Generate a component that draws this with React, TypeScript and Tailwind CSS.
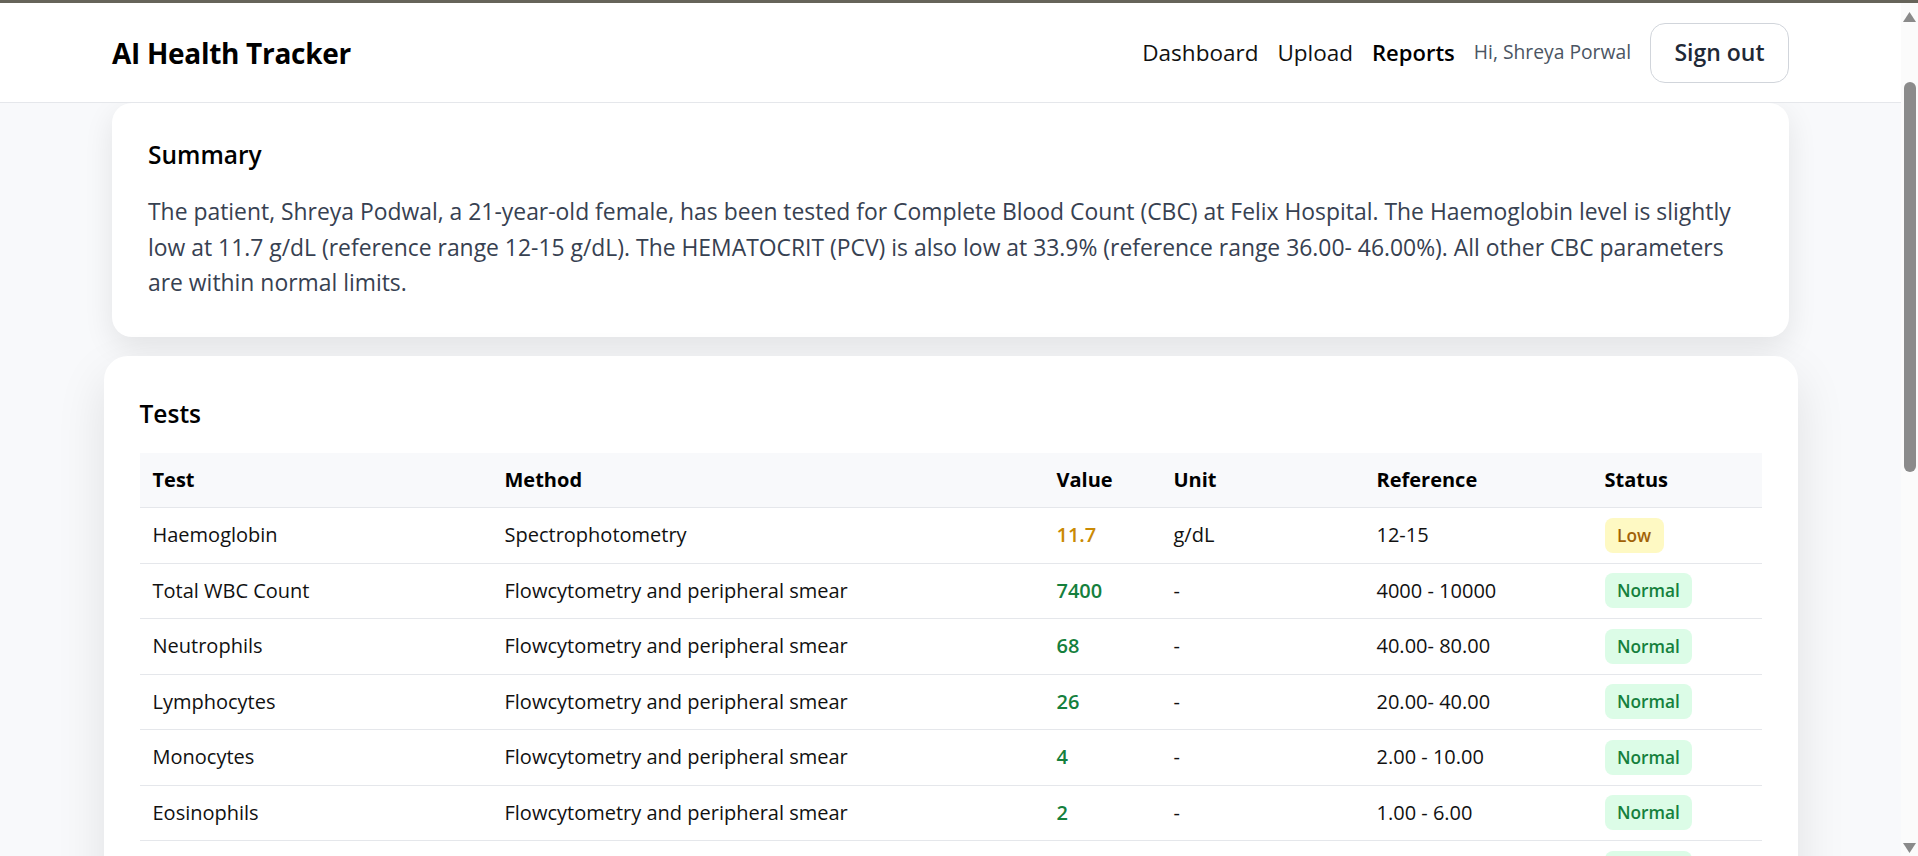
import React from 'react';

const rows = [
  { test: 'Haemoglobin', method: 'Spectrophotometry', value: '11.7', unit: 'g/dL', ref: '12-15', status: 'Low' },
  { test: 'Total WBC Count', method: 'Flowcytometry and peripheral smear', value: '7400', unit: '-', ref: '4000 - 10000', status: 'Normal' },
  { test: 'Neutrophils', method: 'Flowcytometry and peripheral smear', value: '68', unit: '-', ref: '40.00- 80.00', status: 'Normal' },
  { test: 'Lymphocytes', method: 'Flowcytometry and peripheral smear', value: '26', unit: '-', ref: '20.00- 40.00', status: 'Normal' },
  { test: 'Monocytes', method: 'Flowcytometry and peripheral smear', value: '4', unit: '-', ref: '2.00 - 10.00', status: 'Normal' },
  { test: 'Eosinophils', method: 'Flowcytometry and peripheral smear', value: '2', unit: '-', ref: '1.00 - 6.00', status: 'Normal' },
  { test: 'Basophils', method: 'Flowcytometry and peripheral smear', value: '0', unit: '-', ref: '0.00 - 2.00', status: 'Normal' },
];

function StatusBadge({ status }: { status: string }) {
  const low = status === 'Low';
  return (
    <span
      className={`inline-block rounded-[8px] px-[12.5px] py-[7px] align-middle text-[17.3px] leading-[21px] font-semibold ${
        low ? 'bg-[#fef9c3] text-[#a16207]' : 'bg-[#dcfce7] text-[#15803d]'
      }`}
    >
      {status}
    </span>
  );
}

function Scrollbar() {
  return (
    <div className="flex w-[17px] flex-col items-center bg-[#fbfbfb]">
      <svg width="13" height="10" viewBox="0 0 13 10" className="mt-[9px]">
        <polygon points="6.5,0 13,10 0,10" fill="#8a8a8a" />
      </svg>
      <div className="mt-[60px] h-[390px] w-[12px] rounded-full bg-[#8b8b8b]" />
      <div className="flex-1" />
      <svg width="13" height="10" viewBox="0 0 13 10" className="mb-[3px]">
        <polygon points="0,0 13,0 6.5,10" fill="#8a8a8a" />
      </svg>
    </div>
  );
}

export default function App() {
  return (
    <div className="flex h-[856px] flex-col overflow-hidden bg-[#f8f9fb] font-['Open_Sans',sans-serif] text-[#111]">
      <div className="h-[3px] bg-[#66645a]" />
      <div className="flex min-h-0 flex-1">
        <div className="flex min-w-0 flex-1 flex-col">
          {/* header */}
          <header className="flex h-[100px] shrink-0 items-center border-b border-[#e5e7eb] bg-white">
            <div className="mx-auto flex w-[1677px] items-center justify-between">
              <h1 className="text-[28px] font-bold tracking-[-0.3px] text-black">AI Health Tracker</h1>
              <nav className="flex items-center gap-[19px]">
                <a className="text-[22.5px] text-[#111]">Dashboard</a>
                <a className="text-[22.5px] text-[#111]">Upload</a>
                <a className="text-[22px] font-semibold text-black">Reports</a>
                <span className="text-[19.3px] text-[#4b5563]">Hi, Shreya Porwal</span>
                <button className="h-[60px] w-[139px] rounded-[15px] border border-[#d1d5db] bg-white text-[23px] font-semibold text-[#1f2937]">
                  Sign out
                </button>
              </nav>
            </div>
          </header>

          {/* content */}
          <main className="min-h-0 flex-1 overflow-hidden">
            <section className="mx-auto w-[1677px] rounded-[20px] bg-white px-[36px] pb-[36px] pt-[33px] shadow-[0_10px_30px_rgba(0,0,0,0.09)]">
              <h2 className="text-[24.5px] font-semibold leading-[38px] text-black">Summary</h2>
              <p className="mt-[20px] text-[22.9px] leading-[35.5px] text-[#374151]">
                The patient, Shreya Podwal, a 21-year-old female, has been tested for Complete Blood Count (CBC) at Felix Hospital. The Haemoglobin level is slightly low at 11.7 g/dL (reference range 12-15 g/dL). The HEMATOCRIT (PCV) is also low at 33.9% (reference range 36.00- 46.00%). All other CBC parameters are within normal limits.
              </p>
            </section>

            <section className="mx-auto mt-[19px] w-[1694px] rounded-[24px] bg-white px-[36px] pt-[38px] pb-[36px] shadow-[0_20px_50px_rgba(0,0,0,0.1)]">
              <h2 className="text-[24.5px] font-semibold leading-[40px] text-black">Tests</h2>
              <table className="mt-[19px] w-full table-fixed border-collapse text-left text-[20px]">
                <colgroup>
                  <col className="w-[352px]" />
                  <col className="w-[552px]" />
                  <col className="w-[117px]" />
                  <col className="w-[203px]" />
                  <col className="w-[228px]" />
                  <col />
                </colgroup>
                <thead>
                  <tr className="h-[55px] border-b border-[#e5e7eb] bg-[#f8f9fb]">
                    {['Test', 'Method', 'Value', 'Unit', 'Reference', 'Status'].map(h => (
                      <th key={h} className="px-[13px] font-bold text-black">{h}</th>
                    ))}
                  </tr>
                </thead>
                <tbody>
                  {rows.map(r => (
                    <tr key={r.test} className="h-[55.5px] border-b border-[#e5e7eb]">
                      <td className="px-[13px]">{r.test}</td>
                      <td className="px-[13px]">{r.method}</td>
                      <td className={`px-[13px] font-semibold ${r.status === 'Low' ? 'text-[#ca8a04]' : 'text-[#15803d]'}`}>{r.value}</td>
                      <td className="px-[13px]">{r.unit}</td>
                      <td className="px-[13px]">{r.ref}</td>
                      <td className="px-[13px]"><StatusBadge status={r.status} /></td>
                    </tr>
                  ))}
                </tbody>
              </table>
            </section>
          </main>
        </div>
        <Scrollbar />
      </div>
    </div>
  );
}
